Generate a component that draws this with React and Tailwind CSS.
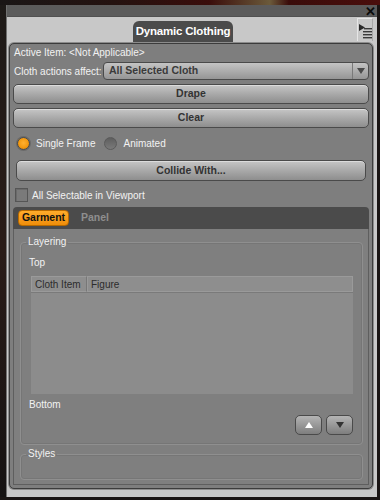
import React from "react";

const btn =
  "flex items-center justify-center rounded-[5px] border border-[#4a4a4a] bg-gradient-to-b from-[#c6c6c6] via-[#a9a9a9] to-[#8e8e8e] text-[10.5px] font-bold text-[#333] shadow-[inset_0_1px_0_#dcdcdc] whitespace-nowrap";

const lbl = "text-[10px] text-[#f2f2f2] whitespace-nowrap";

function MenuIcon() {
  return (
    <svg width="14" height="18" viewBox="0 0 14 18">
      <path d="M1 3 L7 6.5 L1 10 Z" fill="#2a2a2a" />
      <rect x="6" y="7" width="8" height="1.4" fill="#3a3a3a" />
      <rect x="5" y="10" width="9" height="1.4" fill="#3a3a3a" />
      <rect x="5" y="13" width="9" height="1.4" fill="#3a3a3a" />
      <rect x="5" y="16" width="9" height="1.4" fill="#3a3a3a" />
    </svg>
  );
}

export default function App() {
  return (
    <div className="w-[380px] h-[500px] overflow-hidden bg-[#1a1514] font-['Liberation_Sans',Arial,sans-serif] flex flex-col">
      <div className="h-[5px] shrink-0 bg-[linear-gradient(90deg,#1a1616_0%,#241210_30%,#3a0d0b_55%,#6b5a3a_71%,#3a0c0a_76%,#4a0e0c_100%)]" />
      <div className="flex h-[492px] shrink-0">
        <div className="w-[6px] bg-[linear-gradient(180deg,#1e1a18,#2a1c18_50%,#151212)]" />
        <div className="w-[371px] flex flex-col bg-[#c8c8c8] border-l border-[#707070]">
          {/* title bar */}
          <div className="h-[12px] shrink-0 bg-[#5b5b5b] flex items-center justify-end pr-[1px] border-b border-[#505050]">
            <span className="text-[13px] leading-[12px] font-bold text-[#0a0a0a] mt-[2px]">✕</span>
          </div>
          {/* header band */}
          <div className="h-[26px] flex items-end shrink-0">
            <div className="ml-[126px] w-[100px] h-[22px] rounded-t-[6px] bg-[#4b4b4b] flex items-center justify-center text-[11.5px] font-bold text-white whitespace-nowrap tracking-[-0.2px]">
              Dynamic Clothing
            </div>
            <div className="ml-auto mr-[4px] self-start mt-[1px] w-[16px] h-[23px] border-l border-t border-[#e6e6e6] border-r border-r-[#a8a8a8] flex items-start justify-center pt-[2px]">
              <MenuIcon />
            </div>
          </div>
          {/* panel */}
          <div className="ml-[2px] mr-[4px] mb-[8px] flex-1 flex flex-col rounded-[5px] border border-[#3c3c3c] bg-[#7e7e7e] px-[3px] pb-[3px] shadow-[0_0_0_1px_#8c8c8c]">
            <div className={"mt-[2px] h-[14px] leading-[14px] pl-[1px] " + lbl}>
              Active Item: &lt;Not Applicable&gt;
            </div>
            <div className="mt-[2px] h-[18px] flex items-center">
              <span className={"pl-[1px] shrink-0 " + lbl}>Cloth actions affect:</span>
              <div className="ml-auto w-[266px] shrink-0 h-[18px] rounded-[4px] border border-[#4a4a4a] bg-gradient-to-b from-[#c4c4c4] to-[#959595] flex items-center">
                <span className="pl-[5px] text-[10.5px] font-bold text-[#3a3a3a] flex-1 whitespace-nowrap">All Selected Cloth</span>
                <div className="w-[16px] h-full border-l border-[#7a7a7a] flex items-center justify-center">
                  <svg width="8" height="6" viewBox="0 0 8 6">
                    <path d="M0 0 L8 0 L4 6 Z" fill="#4a4a4a" />
                  </svg>
                </div>
              </div>
            </div>
            <div className={btn + " mt-[4px] h-[20px]"}>Drape</div>
            <div className={btn + " mt-[4px] h-[20px]"}>Clear</div>
            <div className="mt-[7px] h-[16px] flex items-center">
              <div className="ml-[4px] w-[13px] h-[13px] rounded-full border border-[#4a4a4a] bg-[radial-gradient(circle_at_50%_45%,#ffb030_0%,#f39a12_55%,#c97400_100%)] shadow-[0_0_0_1px_#6a6a6a]" />
              <span className={"ml-[6px] " + lbl}>Single Frame</span>
              <div className="ml-[9px] w-[13px] h-[13px] rounded-full border border-[#5a5a5a] bg-gradient-to-b from-[#5e5e5e] to-[#7a7a7a]" />
              <span className={"ml-[6px] " + lbl}>Animated</span>
            </div>
            <div className={btn + " mt-[9px] mx-[3px] h-[21px]"}>Collide With...</div>
            <div className="mt-[7px] h-[14px] flex items-center">
              <div className="ml-[2px] w-[13px] h-[14px] border border-[#555] bg-[#7a7a7a] shadow-[inset_1px_1px_0_#6a6a6a]" />
              <span className={"ml-[4px] " + lbl}>All Selectable in Viewport</span>
            </div>
            {/* tab bar */}
            <div className="mt-[5px] h-[22px] rounded-t-[4px] bg-[#4b4b4b] flex items-center pl-[5px]">
              <div className="h-[16px] w-[51px] justify-center rounded-[4px] border border-[#b86a00] bg-gradient-to-b from-[#ffac2a] to-[#f08e08] flex items-center text-[10.5px] font-bold text-[#111]">
                Garment
              </div>
              <span className="ml-[12px] text-[10.5px] font-bold text-[#8e8e8e]">Panel</span>
            </div>
            {/* body */}
            <div className="flex-1 flex flex-col border-x border-b border-[#5e5e5e] bg-[#7f7f7f]">
              <fieldset className="mt-[6px] ml-[6px] mr-[5px] border border-[#8f8f8f] rounded-[4px] p-0 pb-[9px] shadow-[inset_0_0_0_1px_#767676]">
                <legend className={"ml-[5px] px-[2px] h-[14px] leading-[14px] " + lbl}>Layering</legend>
                <div className={"mt-[7px] ml-[8px] h-[14px] leading-[14px] " + lbl}>Top</div>
                <div className="mt-[6px] ml-[10px] w-[322px] h-[118px] bg-[#8c8c8c] flex flex-col">
                  <div className="h-[17px] flex border-b border-[#7a7a7a] text-[10px] text-[#2c2c2c]">
                    <div className="w-[56px] h-full flex items-center pl-[3px] border border-[#9a9a9a] border-r-[#777] bg-[#8e8e8e] whitespace-nowrap">Cloth Item</div>
                    <div className="flex-1 h-full flex items-center pl-[3px] border border-[#9a9a9a] bg-[#8e8e8e]">Figure</div>
                  </div>
                </div>
                <div className={"mt-[4px] ml-[8px] h-[14px] leading-[14px] " + lbl}>Bottom</div>
                <div className="mt-[3px] mr-[9px] flex justify-end gap-[4px]">
                  <div className="w-[27px] h-[20px] rounded-[5px] border border-[#4a4a4a] bg-gradient-to-b from-[#b4b4b4] to-[#7e7e7e] flex items-center justify-center">
                    <svg width="8" height="6" viewBox="0 0 8 6">
                      <path d="M0 6 L8 6 L4 0 Z" fill="#ffffff" />
                    </svg>
                  </div>
                  <div className="w-[27px] h-[20px] rounded-[5px] border border-[#4a4a4a] bg-gradient-to-b from-[#b4b4b4] to-[#7e7e7e] flex items-center justify-center">
                    <svg width="8" height="6" viewBox="0 0 8 6">
                      <path d="M0 0 L8 0 L4 6 Z" fill="#333333" />
                    </svg>
                  </div>
                </div>
              </fieldset>
              <fieldset className="mt-[2px] ml-[6px] mr-[5px] border border-[#8f8f8f] rounded-[4px] p-0 shadow-[inset_0_0_0_1px_#767676]">
                <legend className={"ml-[5px] px-[2px] h-[14px] leading-[14px] " + lbl}>Styles</legend>
                <div className="h-[18px]" />
              </fieldset>
            </div>
          </div>
        </div>
        <div className="w-[3px] bg-[#1a1514]" />
      </div>
    </div>
  );
}
